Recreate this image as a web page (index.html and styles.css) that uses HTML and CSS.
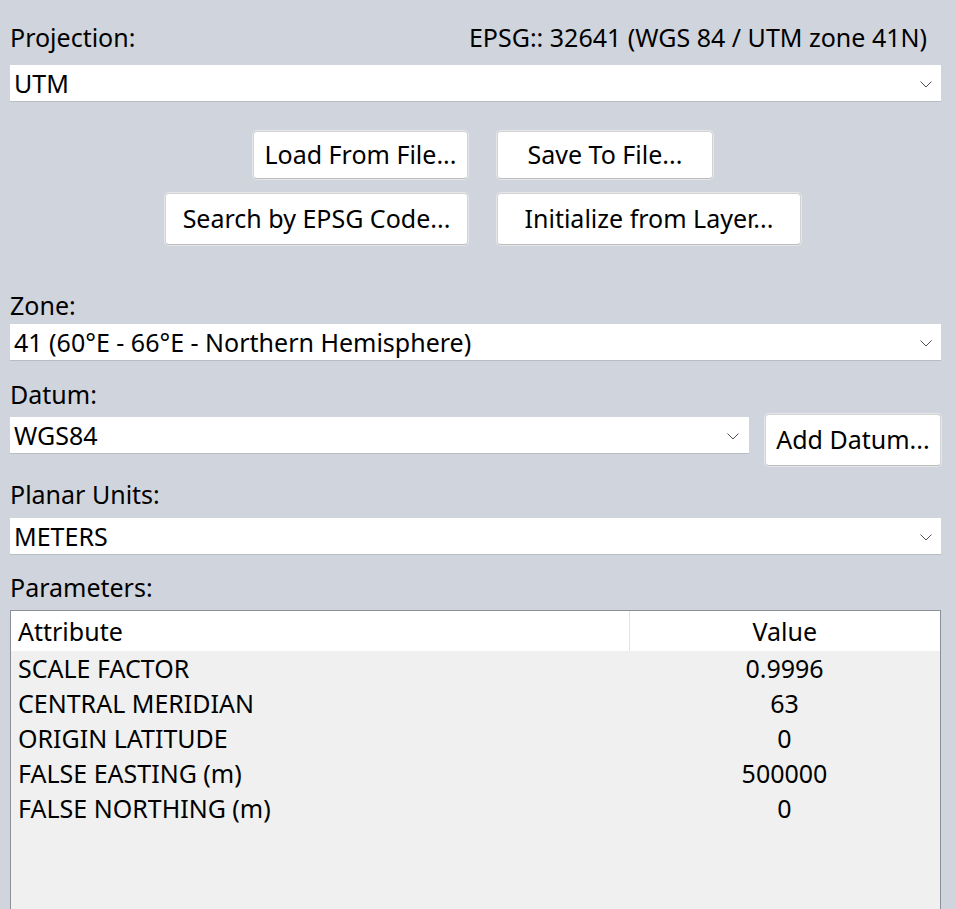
FILE: index.html
```html
<!DOCTYPE html>
<html>
<head>
<meta charset="utf-8">
<link rel="stylesheet" href="styles.css">
</head>
<body>
<div class="page">
  <div class="proj-row">
    <span class="label">Projection:</span>
    <span class="epsg">EPSG:: 32641 (WGS 84 / UTM zone 41N)</span>
  </div>
  <div class="combo combo-proj"><span>UTM</span><svg class="chev" width="12" height="7" viewBox="0 0 12 7"><polyline points="0.5,0.5 6,6 11.5,0.5" fill="none" stroke="#505050" stroke-width="1"/></svg></div>

  <div class="btn-grid">
    <button class="btn btn-load">Load From File...</button>
    <button class="btn btn-save">Save To File...</button>
    <button class="btn btn-search">Search by EPSG Code...</button>
    <button class="btn btn-init">Initialize from Layer...</button>
  </div>

  <div class="label label-zone">Zone:</div>
  <div class="combo combo-zone"><span>41 (60°E - 66°E - Northern Hemisphere)</span><svg class="chev" width="12" height="7" viewBox="0 0 12 7"><polyline points="0.5,0.5 6,6 11.5,0.5" fill="none" stroke="#505050" stroke-width="1"/></svg></div>

  <div class="label label-datum">Datum:</div>
  <div class="datum-row">
    <div class="combo combo-datum"><span>WGS84</span><svg class="chev" width="12" height="7" viewBox="0 0 12 7"><polyline points="0.5,0.5 6,6 11.5,0.5" fill="none" stroke="#505050" stroke-width="1"/></svg></div>
    <button class="btn btn-add">Add Datum...</button>
  </div>

  <div class="label label-units">Planar Units:</div>
  <div class="combo combo-units"><span>METERS</span><svg class="chev" width="12" height="7" viewBox="0 0 12 7"><polyline points="0.5,0.5 6,6 11.5,0.5" fill="none" stroke="#505050" stroke-width="1"/></svg></div>

  <div class="label label-params">Parameters:</div>
  <div class="grid-box">
    <table class="params">
      <thead>
        <tr><th class="c-attr">Attribute</th><th class="c-val">Value</th></tr>
      </thead>
      <tbody>
        <tr><td class="c-attr">SCALE FACTOR</td><td class="c-val">0.9996</td></tr>
        <tr><td class="c-attr">CENTRAL MERIDIAN</td><td class="c-val">63</td></tr>
        <tr><td class="c-attr">ORIGIN LATITUDE</td><td class="c-val">0</td></tr>
        <tr><td class="c-attr">FALSE EASTING (m)</td><td class="c-val">500000</td></tr>
        <tr><td class="c-attr">FALSE NORTHING (m)</td><td class="c-val">0</td></tr>
      </tbody>
    </table>
  </div>
</div>
</body>
</html>
```
FILE: styles.css
```css
* { box-sizing: border-box; }
html, body {
  margin: 0;
  padding: 0;
  background: #d0d4dc;
  overflow: hidden;
}
body {
  font-family: "Noto Sans", "Open Sans", sans-serif;
  font-size: 25px;
  color: #000;
}
.page {
  padding: 23px 14px 0 10px;
  width: 955px;
  height: 909px;
}
.label {
  line-height: 28px;
  height: 28px;
  white-space: nowrap;
}
.proj-row {
  display: flex;
  justify-content: space-between;
  line-height: 28px;
  height: 28px;
}
.epsg {
  padding-right: 14px;
}
.combo {
  position: relative;
  height: 37px;
  line-height: 37px;
  background: #fff;
  border-bottom: 1px solid #b8bcc4;
  padding-left: 4px;
  white-space: nowrap;
}
.combo .chev {
  position: absolute;
  right: 9px;
  top: 16px;
}
.combo-proj { margin-top: 14px; }

.btn-grid {
  display: grid;
  grid-template-columns: 1fr 1fr;
  column-gap: 29px;
  row-gap: 14px;
  margin-top: 29px;
  padding-left: 14px;
}
.btn {
  font-family: inherit;
  font-size: 25px;
  line-height: 1;
  color: #000;
  background: #fff;
  border: 1px solid #d3d3d3;
  border-bottom-color: #bdbdbd;
  border-radius: 4px;
  box-shadow: 0 0 0 1px #e4e6ea;
  padding: 0 0 2px 0;
  margin: 0;
  white-space: nowrap;
  text-align: center;
}
.btn-load { width: 215px; height: 48px; justify-self: end; }
.btn-save { width: 216px; height: 48px; justify-self: start; }
.btn-search { width: 303px; height: 52px; justify-self: end; }
.btn-init { width: 304px; height: 52px; justify-self: start; }

.label-zone { margin-top: 46px; }
.combo-zone { margin-top: 5px; }
.label-datum { margin-top: 19px; }
.datum-row {
  display: flex;
  align-items: flex-start;
  gap: 16px;
  margin-top: 6px;
}
.combo-datum {
  flex: 1;
  margin-top: 3px;
}
.combo-datum .chev { right: 10px; }
.btn-add {
  width: 176px;
  height: 52px;
  flex: none;
}
.label-units { margin-top: 14px; }
.combo-units { margin-top: 10px; }
.label-params { margin-top: 18px; }

.grid-box {
  margin-top: 9px;
  height: 320px;
  border: 1px solid #8c8f96;
  background: #f0f0f0;
}
.params {
  width: 100%;
  border-collapse: collapse;
  table-layout: fixed;
}
.params th {
  font-weight: normal;
  background: #fff;
  height: 40px;
  line-height: 40px;
  padding: 0;
}
.params th.c-attr {
  text-align: left;
  padding-left: 7px;
  width: 618px;
  border-right: 1px solid #e3e3e3;
}
.params th.c-val {
  text-align: center;
}
.params td {
  height: 35px;
  line-height: 35px;
  padding: 0;
  white-space: nowrap;
}
.params td.c-attr { padding-left: 7px; }
.params td.c-val { text-align: center; }
```
